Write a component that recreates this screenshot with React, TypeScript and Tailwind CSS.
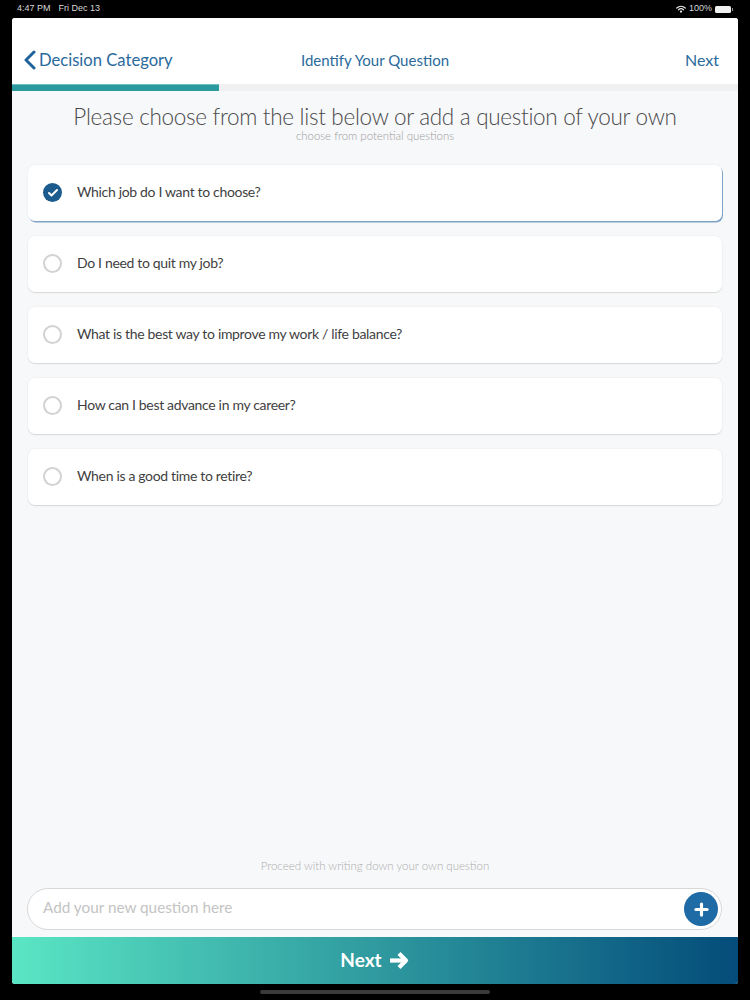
import { Check, Plus } from 'lucide-react';

const QUESTIONS = [
  'Which job do I want to choose?',
  'Do I need to quit my job?',
  'What is the best way to improve my work / life balance?',
  'How can I best advance in my career?',
  'When is a good time to retire?',
];

function StatusBar() {
  return (
    <div className="h-[18px] shrink-0 flex items-center justify-between px-[17px] text-[9px] text-[#d8d8d8] font-['Liberation_Sans',sans-serif]">
      <div className="flex gap-[8px]">
        <span>4:47 PM</span>
        <span>Fri Dec 13</span>
      </div>
      <div className="flex items-center gap-[3px]">
        <svg width="10" height="8" viewBox="0 0 20 15" fill="none" stroke="#e8e8e8" strokeWidth="2.4" strokeLinecap="round">
          <path d="M1.5 5.5C6.5 .8 13.5 .8 18.5 5.5" />
          <path d="M5 9c3-2.6 7-2.6 10 0" />
          <circle cx="10" cy="12.6" r="1.1" fill="#e8e8e8" />
        </svg>
        <span>100%</span>
        <div className="flex items-center gap-px">
          <div className="w-[16px] h-[7px] rounded-[1.5px] bg-[#f0f0f0]" />
          <div className="w-px h-[3px] bg-[#999]" />
        </div>
      </div>
    </div>
  );
}

function QuestionCard({ text, selected }: { text: string; selected: boolean }) {
  return (
    <div
      className={`h-[56px] bg-white rounded-[7px] flex items-center pl-[15px] pb-[1px] ${
        selected
          ? 'shadow-[1px_1.5px_0_#7fa3c6,0_0_2px_rgba(0,0,0,0.08)]'
          : 'shadow-[0_1px_1px_#d9d9d9,0_0_2px_rgba(0,0,0,0.08)]'
      }`}
    >
      {selected ? (
        <div className="w-[19px] h-[19px] rounded-full bg-[#1c5b8d] flex items-center justify-center">
          <Check size={12} color="#fff" strokeWidth={4} />
        </div>
      ) : (
        <div className="w-[19px] h-[19px] rounded-full border-2 border-[#d2d2d2] bg-white" />
      )}
      <span className="ml-[15px] -mt-[3px] text-[14px] tracking-[-0.33px] text-[#3f3f3f]">{text}</span>
    </div>
  );
}

export default function App() {
  return (
    <div className="w-[750px] h-[1000px] bg-black flex flex-col overflow-hidden font-['Lato','Noto_Sans',sans-serif]">
      <StatusBar />

      <div className="mx-[12px] w-[726px] h-[966px] shrink-0 rounded-[3px] overflow-hidden bg-[#f7f8fa] flex flex-col">
        {/* header */}
        <div className="h-[66px] shrink-0 bg-white grid grid-cols-3 items-center pt-[18px] text-[#2a6a9c]">
          <div className="flex items-center pl-[11px] gap-[3px] whitespace-nowrap text-[16.6px]">
            <svg width="13" height="20" viewBox="0 0 13 20" fill="none" stroke="#20639a" strokeWidth="3" strokeLinecap="round" strokeLinejoin="round">
              <path d="M11 2 3 10l8 8" />
            </svg>
            <span>Decision Category</span>
          </div>
          <div className="text-center whitespace-nowrap text-[15px]">Identify Your Question</div>
          <div className="text-right pr-[19px] text-[16px]">Next</div>
        </div>

        {/* progress */}
        <div className="h-[7px] shrink-0 bg-[#f0f0f1]">
          <div className="h-full w-[207px] bg-[#2b9a9f] border-t border-[#6fc0c6]" />
        </div>

        <h1 className="mt-[12px] text-center text-[22.5px] tracking-[-0.3px] leading-[27px] font-light text-[#4a4a4a] whitespace-nowrap">
          Please choose from the list below or add a question of your own
        </h1>
        <p className="text-center text-[11.4px] leading-[12px] font-light text-[#9c9c9c]">
          choose from potential questions
        </p>

        {/* questions */}
        <div className="mt-[23px] mx-[16px] w-[694px] flex flex-col gap-[15px]">
          {QUESTIONS.map((q, i) => (
            <QuestionCard key={q} text={q} selected={i === 0} />
          ))}
        </div>

        <div className="flex-1" />

        <p className="text-center text-[11.5px] leading-[16px] font-light text-[#adadad] mb-[14px]">
          Proceed with writing down your own question
        </p>

        {/* new question input */}
        <div className="mx-[15px] w-[695px] h-[42px] shrink-0 rounded-full bg-white border border-[#d8d8d8] flex items-center justify-between pl-[15px] pr-[3px]">
          <span className="text-[15.3px] -mt-[4px] text-[#c4c4c4]">Add your new question here</span>
          <div className="w-[34px] h-[34px] rounded-full bg-[#1f6ba5] flex items-center justify-center">
            <Plus size={19} color="#fff" strokeWidth={4} />
          </div>
        </div>

        {/* next button */}
        <div className="mt-[7px] h-[47px] shrink-0 bg-gradient-to-r from-[#5ae6c4] via-[#2f9a9f] to-[#054c7a] flex items-center justify-center gap-[7px] text-white">
          <span className="text-[19px] font-bold">Next</span>
          <svg width="21" height="19" viewBox="0 0 21 19" fill="none" stroke="#fff" strokeWidth="4.2" strokeLinejoin="round">
            <path d="M1 9.5h16" />
            <path d="M10 2.5l7 7-7 7" />
          </svg>
        </div>
      </div>

      {/* home indicator */}
      <div className="flex-1 flex items-center justify-center">
        <div className="w-[230px] h-[4px] rounded-full bg-[#3a3a3a]" />
      </div>
    </div>
  );
}
